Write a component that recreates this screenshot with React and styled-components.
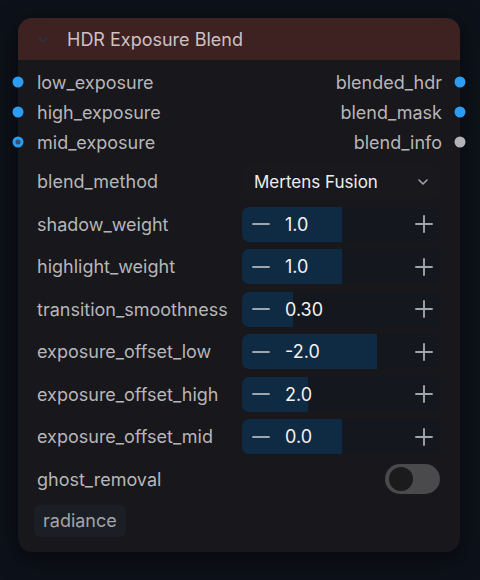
import React from "react";
import styled, { createGlobalStyle } from "styled-components";

const Global = createGlobalStyle`
  html, body { margin: 0; padding: 0; background: #0d1119; }
  body { font-family: Inter, "Noto Sans", sans-serif; -webkit-font-smoothing: antialiased; }
  #root { width: 480px; height: 580px; }
`;

const Page = styled.div`
  width: 480px;
  height: 580px;
  padding: 18px 20px 0 18px;
  box-sizing: border-box;
`;

const Card = styled.div`
  width: 442px;
  height: 534px;
  background: #18171b;
  border-radius: 14px;
  box-shadow: 0 6px 24px rgba(0, 0, 0, 0.55);
  display: flex;
  flex-direction: column;
`;

const Header = styled.div`
  height: 42px;
  background: #3e2222;
  border-radius: 14px 14px 0 0;
  display: flex;
  align-items: center;
  padding: 1px 0 0 18px;
  box-sizing: border-box;
  gap: 17px;
`;

const Title = styled.span`
  color: #cdc1c1;
  font-size: 18px;
`;

const Body = styled.div`
  padding: 7px 20px 0 19px;
  display: flex;
  flex-direction: column;
`;

const IORow = styled.div`
  height: 30px;
  margin-right: -2px;
  display: flex;
  align-items: center;
  justify-content: space-between;
  position: relative;
`;

const PortLabel = styled.span`
  color: #b6b6b9;
  font-size: 18px;
`;

const Dot = styled.span`
  position: absolute;
  top: 50%;
  width: 11px;
  height: 11px;
  border-radius: 50%;
  background: ${(p) => p.$color};
  box-sizing: border-box;
  ${(p) =>
    p.$side === "left"
      ? "left: -19px; transform: translate(-50%, -50%);"
      : "right: -18px; transform: translate(50%, -50%);"}
  ${(p) => p.$hollow && `border: 3px solid ${p.$color}; background: #33506e;`}
`;

const Widgets = styled.div`
  margin-top: 7px;
  display: grid;
  grid-template-columns: 1fr 198px;
  grid-auto-rows: 35px;
  row-gap: 7.5px;
  align-items: center;
`;

const Label = styled.span`
  color: #b6b6b9;
  font-size: 18px;
`;

const Select = styled.div`
  height: 35px;
  border-radius: 7px;
  background: #19191d;
  display: flex;
  align-items: center;
  justify-content: space-between;
  padding: 0 10px 0 12px;
  color: #eeeeee;
  font-size: 17px;
`;

const Slider = styled.div`
  position: relative;
  height: 35px;
  border-radius: 7px;
  background: #14171d;
  overflow: hidden;
  display: flex;
  align-items: center;
  padding: 0 6px 0 9px;
  box-sizing: border-box;
`;

const Fill = styled.div`
  position: absolute;
  left: 0;
  top: 0;
  bottom: 0;
  background: #0f2a43;
`;

const Value = styled.span`
  position: relative;
  color: #f2f2f2;
  font-size: 18px;
  margin-left: 14px;
  flex: 1;
`;

const IconBox = styled.span`
  position: relative;
  display: flex;
  align-items: center;
`;

const Toggle = styled.div`
  justify-self: end;
  width: 55px;
  height: 30px;
  border-radius: 15px;
  background: #4a4a4d;
  display: flex;
  align-items: center;
  padding-left: 4px;
  box-sizing: border-box;
`;

const Knob = styled.span`
  width: 24px;
  height: 24px;
  border-radius: 50%;
  background: #1b1b1c;
`;

const Tag = styled.div`
  margin-top: 8px;
  align-self: flex-start;
  margin-left: -3px;
  padding: 5px 9px 6px;
  border-radius: 6px;
  background: #1b1e25;
  color: #a3a4a8;
  font-size: 18px;
`;

const Minus = () => (
  <svg width="20" height="20" viewBox="0 0 20 20">
    <path d="M2 10h16" stroke="#a0a4ab" strokeWidth="1.9" strokeLinecap="round" />
  </svg>
);
const Plus = () => (
  <svg width="20" height="20" viewBox="0 0 20 20">
    <path d="M2 10h16M10 2v16" stroke="#a0a4ab" strokeWidth="1.9" strokeLinecap="round" />
  </svg>
);
const Chevron = ({ color = "#2c3442", size = 14 }) => (
  <svg width={size} height={size} viewBox="0 0 14 14">
    <path d="M3 5l4 4 4-4" fill="none" stroke={color} strokeWidth="1.6" strokeLinecap="round" strokeLinejoin="round" />
  </svg>
);

const io = [
  ["low_exposure", "blended_hdr", false, "#2d9cf3"],
  ["high_exposure", "blend_mask", false, "#2d9cf3"],
  ["mid_exposure", "blend_info", true, "#b3b3b5"],
];

const sliders = [
  ["shadow_weight", "1.0", 50.5],
  ["highlight_weight", "1.0", 50.5],
  ["transition_smoothness", "0.30", 26],
  ["exposure_offset_low", "-2.0", 68],
  ["exposure_offset_high", "2.0", 33.5],
  ["exposure_offset_mid", "0.0", 50.5],
];

export default function App() {
  return (
    <>
      <Global />
      <Page>
        <Card>
          <Header>
            <Chevron />
            <Title>HDR Exposure Blend</Title>
          </Header>
          <Body>
            {io.map(([l, r, hollow, rc]) => (
              <IORow key={l}>
                <Dot $side="left" $color="#2d9cf3" $hollow={hollow} />
                <PortLabel>{l}</PortLabel>
                <PortLabel>{r}</PortLabel>
                <Dot $side="right" $color={rc} />
              </IORow>
            ))}
            <Widgets>
              <Label>blend_method</Label>
              <Select>
                Mertens Fusion
                <Chevron color="#a0a3aa" size={14} />
              </Select>
              {sliders.map(([name, val, pct]) => (
                <React.Fragment key={name}>
                  <Label>{name}</Label>
                  <Slider>
                    <Fill style={{ width: `${pct}%` }} />
                    <IconBox><Minus /></IconBox>
                    <Value>{val}</Value>
                    <IconBox><Plus /></IconBox>
                  </Slider>
                </React.Fragment>
              ))}
              <Label>ghost_removal</Label>
              <Toggle><Knob /></Toggle>
            </Widgets>
            <Tag>radiance</Tag>
          </Body>
        </Card>
      </Page>
    </>
  );
}
